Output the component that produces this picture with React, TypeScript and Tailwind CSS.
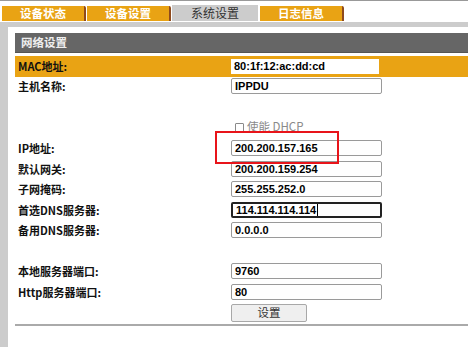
const TABS = [
  { label: '设备状态', active: false },
  { label: '设备设置', active: false },
  { label: '系统设置', active: true },
  { label: '日志信息', active: false },
]

const cjk = "font-['Microsoft_YaHei','Noto_Sans_CJK_SC',sans-serif]"
const val = "font-['Liberation_Sans',Arial,sans-serif] font-bold text-[11px] text-black"

function Field({ value, focused }: { value: string; focused?: boolean }) {
  return (
    <div
      className={`w-[151px] h-[16px] rounded-[2px] bg-white flex items-center pl-[3px] ${val} ${
        focused ? 'border-2 border-[#222] pl-[2px]' : 'border border-[#9a9a9a]'
      }`}
    >
      {value}
      {focused && <span className="w-px h-[12px] bg-black ml-px" />}
    </div>
  )
}

function Row({ label, value, focused, className = '' }: { label: string; value: string; focused?: boolean; className?: string }) {
  return (
    <div className={`flex items-center h-[16px] ${className}`}>
      <div className={`w-[216px] pl-[3px] text-[11px] font-bold text-[#111] ${cjk}`}>{label}</div>
      <Field value={value} focused={focused} />
    </div>
  )
}

export default function App() {
  return (
    <div className="relative w-[468px] h-[347px] overflow-hidden bg-white border-t border-[#999] flex flex-col">
      {/* tabs */}
      <div className="flex items-end h-[20px] pl-[2px] shrink-0">
        {TABS.map((t) =>
          t.active ? (
            <div
              key={t.label}
              className={`w-[86px] h-[16px] mr-[2px] bg-[#cccccc] flex items-center justify-center text-[12px] text-[#333] ${cjk}`}
            >
              {t.label}
            </div>
          ) : (
            <div
              key={t.label}
              className={`w-[84px] h-[15px] mr-[1px] bg-[#e9a314] border-r-2 border-[#8e4a1e] rounded-tr-[2px] flex items-center justify-center text-[11.5px] font-bold text-white ${cjk}`}
            >
              {t.label}
            </div>
          )
        )}
      </div>

      {/* main */}
      <div className="flex-1 mt-px border-t-[5px] border-l-[8px] border-[#cccccc] pl-[7px] pt-[6px]">
        <div className={`h-[20px] bg-[#666666] border-b border-[#555] flex items-center pl-[6px] text-[11.5px] font-bold text-[#eeeeee] ${cjk}`}>
          网络设置
        </div>

        <div className="mt-[3px] h-[21px] bg-[#e9a314] flex items-center">
          <div className={`w-[216px] pl-[3px] text-[11px] font-bold text-[#111] ${cjk}`}>MAC地址:</div>
          <div className={`w-[148px] h-[15px] bg-white flex items-center pl-[3px] ${val}`}>80:1f:12:ac:dd:cd</div>
        </div>

        <Row className="mt-px" label="主机名称:" value="IPPDU" />

        <div className="flex items-center h-[16px] mt-[25px] pl-[220px]">
          <span className="w-[9px] h-[9px] border border-[#8a8a8a] rounded-[1px] bg-white" />
          <span className={`ml-[3px] text-[11.5px] text-[#8a8a8a] ${cjk}`}>使能 DHCP</span>
        </div>

        <Row className="mt-[5px]" label="IP地址:" value="200.200.157.165" />
        <Row className="mt-[5px]" label="默认网关:" value="200.200.159.254" />
        <Row className="mt-[4px]" label="子网掩码:" value="255.255.252.0" />
        <Row className="mt-[5px]" label="首选DNS服务器:" value="114.114.114.114" focused />
        <Row className="mt-[4px]" label="备用DNS服务器:" value="0.0.0.0" />

        <Row className="mt-[25px]" label="本地服务器端口:" value="9760" />
        <Row className="mt-[5px]" label="Http服务器端口:" value="80" />

        <div className="mt-[4px] pl-[216px]">
          <button className={`w-[76px] h-[18px] bg-[#efefef] border border-[#a8a8a8] rounded-[2px] text-[11.5px] text-[#333] flex items-center justify-center ${cjk}`}>
            设置
          </button>
        </div>
        <div className="mt-[2px] h-[2px] bg-[#aaaaaa]" />
      </div>

      {/* annotation */}
      <div className="absolute left-[215px] top-[130px] w-[124px] h-[33px] border-2 border-[#e8141a]" />
    </div>
  )
}
